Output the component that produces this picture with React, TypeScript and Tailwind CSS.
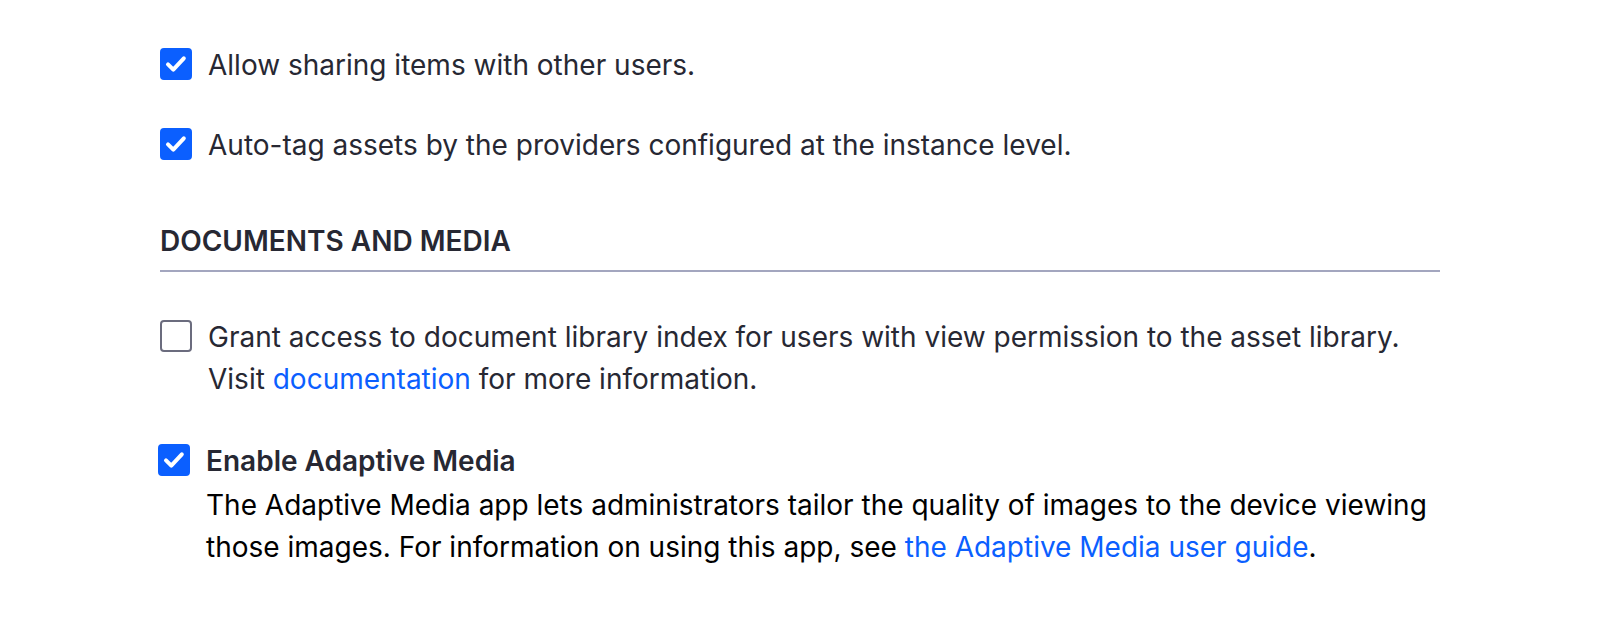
import React from "react";

type CheckProps = { id: string; checked?: boolean };

function Check({ id, checked = false }: CheckProps) {
  return (
    <span className="relative mt-1 grid size-8 shrink-0 self-start">
      <input
        id={id}
        type="checkbox"
        defaultChecked={checked}
        className="peer size-8 appearance-none rounded-sm border-2 border-[#6b6c7e] bg-white checked:border-[#0b5fff] checked:bg-[#0b5fff]"
      />
      <svg
        viewBox="0 0 32 32"
        className="pointer-events-none absolute inset-0 hidden size-8 peer-checked:block"
        fill="none"
        stroke="white"
        strokeWidth="4"
        strokeLinecap="round"
        strokeLinejoin="round"
        aria-hidden="true"
      >
        <path d="M8 16.4L13.3 21.6L23.8 10.3" />
      </svg>
    </span>
  );
}

export default function App() {
  return (
    <main className="bg-white px-40 pt-11 pb-12 font-['Inter',sans-serif] text-[28px] leading-[42px] text-[#272833]">
      <div className="flex gap-4">
        <Check id="sharing" checked />
        <label htmlFor="sharing">Allow sharing items with other users.</label>
      </div>
      <div className="mt-[38px] flex gap-4">
        <Check id="autotag" checked />
        <label htmlFor="autotag">Auto-tag assets by the providers configured at the instance level.</label>
      </div>
      <h2 className="mt-[54px] border-b-2 border-[#a3a6bf] pb-2 font-semibold">DOCUMENTS AND MEDIA</h2>
      <div className="mt-11 flex gap-4">
        <Check id="grant" />
        <div>
          <label htmlFor="grant">Grant access to document library index for users with view permission to the asset library.</label>
          <p>
            Visit <a href="#documentation" className="text-[#0b5fff]">documentation</a> for more information.
          </p>
        </div>
      </div>
      <div className="mt-10 -ml-0.5 flex gap-4">
        <Check id="adaptive" checked />
        <div>
          <label htmlFor="adaptive" className="font-semibold">Enable Adaptive Media</label>
          <p className="mt-0.5 text-black">
            The Adaptive Media app lets administrators tailor the quality of images to the device viewing those images. For information on using this app, see{" "}
            <a href="#guide" className="text-[#0b5fff]">the Adaptive Media user guide</a>.
          </p>
        </div>
      </div>
    </main>
  );
}
